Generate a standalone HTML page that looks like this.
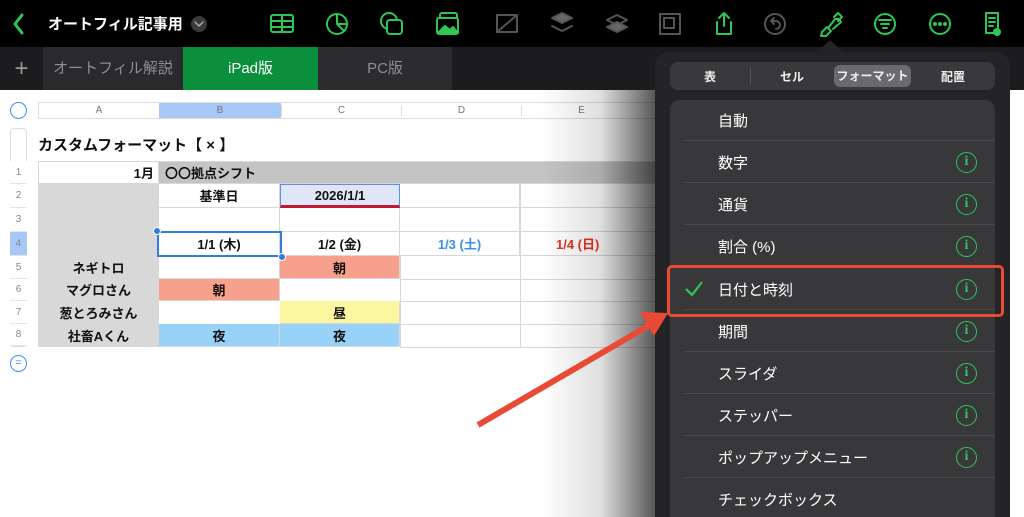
<!DOCTYPE html>
<html style="width:1024px;height:517px;overflow:hidden"><head><meta charset="utf-8"><style>
*{margin:0;padding:0;box-sizing:border-box}
body{width:1024px;height:517px;overflow:hidden;background:#fff;font-family:"Liberation Sans","Noto Sans CJK JP",sans-serif;position:relative}
.a{position:absolute}
.top{left:0;top:0;width:1024px;height:47px;background:#000}
.tabs{left:0;top:47px;width:1024px;height:43px;background:#1c1c1e}
.tab{position:absolute;top:0;height:43px;line-height:43px;text-align:center;font-size:15px;color:#8e8e93}
.cell{position:absolute;border-right:1px solid #d8d8d8;border-bottom:1px solid #d8d8d8;font-size:13px;font-weight:bold;text-align:center;color:#111;display:flex;align-items:center;justify-content:center}
.rn{position:absolute;left:10px;width:17px;font-size:10px;color:#888;text-align:center;border-bottom:1px solid #e4e4e4;background:#fff}
.pop{left:655px;top:52px;width:355px;height:465px;background:#242426;border-radius:14px 14px 0 0}
.row{position:absolute;left:670px;width:325px;height:42px;color:#fff;font-size:15px}
.row span{position:absolute;left:48px;top:11px}
.row .sep{position:absolute;left:14px;right:0;bottom:0;height:1px;background:#4a4a4d}
.info{position:absolute;right:18px;top:11px;width:21px;height:21px;border:1.6px solid #2fc653;border-radius:50%;color:#2fc653;font-family:"Liberation Serif",serif;font-size:14px;font-weight:bold;text-align:center;line-height:18px}
</style></head><body>
<div class="a top"></div>
<svg class="a" style="left:0;top:0" width="1024" height="47" fill="none" stroke-width="2" stroke-linecap="round" stroke-linejoin="round">
<path d="M22 15 L15 24 L22 33" stroke="#2fc653" stroke-width="3"/>
<circle cx="199" cy="24" r="8" fill="#3a3a3c" stroke="none"/><path d="M195 22 L199 26 L203 22" stroke="#aaa" stroke-width="1.5"/>
<g stroke="#2fc653">
<rect x="271" y="15" width="22" height="17" rx="2"/><path d="M271 21h22M271 27h22M282 15v17"/>
<circle cx="337" cy="24" r="10"/><path d="M337 14v10l7 7M337 24h10"/>
<circle cx="389" cy="21" r="8"/><rect x="387" y="20" width="15" height="14" rx="3" fill="#000"/>
<rect x="440" y="13" width="17" height="14" rx="2"/><rect x="437" y="18" width="21" height="16" rx="2" fill="#000"/><path d="M438 33l7-7 5 4 3-3 5 6z" fill="#2fc653"/>
<path d="M717 22v12h14V22M724 13v13M719 18l5-5 5 5"/>
<circle cx="885" cy="24" r="10"/><path d="M879 20h12M881 24h8M883 28h4"/>
<circle cx="940" cy="24" r="10"/><circle cx="935" cy="24" r="1" fill="#2fc653"/><circle cx="940" cy="24" r="1" fill="#2fc653"/><circle cx="945" cy="24" r="1" fill="#2fc653"/>
<path d="M986 13h12v20h-12z M989 18h6M989 22h6M989 26h4"/><circle cx="997" cy="32" r="3" fill="#2fc653"/>
<path d="M822 32l5-5 4 4-5 5-5 0z M829 27l6-8 4 0 2 3-8 7M834 17l4-4 4 4-4 4"/>
</g>
<g stroke="#555"><rect x="497" y="15" width="20" height="17"/><path d="M497 32l20-17"/>
<path d="M552 18l10-5 10 5-10 5z" fill="#666"/><path d="M552 26l10 5 10-5"/>
<path d="M607 20l10-5 10 5-10 5z"/><path d="M607 27l10 5 10-5-10-5z" fill="#666"/>
<rect x="660" y="14" width="20" height="20"/><rect x="664" y="18" width="10" height="10"/>
<circle cx="775" cy="24" r="10"/><path d="M771 21h5a4 4 0 1 1 0 8M771 21l3-3M771 21l3 3"/></g>
</svg>
<div class="a" style="left:48px;top:13px;color:#fff;font-size:15px;font-weight:bold">オートフィル記事用</div>
<div class="a tabs">
<div class="tab" style="left:0;width:43px;font-size:24px;color:#999">+</div>
<div class="tab" style="left:43px;width:140px;background:#2a2a2c">オートフィル解説</div>
<div class="tab" style="left:183px;width:135px;background:#0a8f3c;color:#fff">iPad版</div>
<div class="tab" style="left:318px;width:134px;background:#2c2c2e">PC版</div>
</div>
<div class="a" style="left:10px;top:102px;width:17px;height:17px;border:1.5px solid #3a8ef0;border-radius:50%"></div>
<div class="a" style="left:38px;top:102px;width:620px;height:17px;border:1px solid #ddd;font-size:10px;color:#777">
<div class="a" style="left:0;width:120px;text-align:center;top:2px">A</div>
<div class="a" style="left:120px;width:122px;background:#a8c8f8;height:15px;text-align:center;padding-top:2px">B</div>
<div class="a" style="left:242px;width:120px;text-align:center;top:2px;border-left:1px solid #ddd">C</div>
<div class="a" style="left:362px;width:120px;text-align:center;top:2px;border-left:1px solid #ddd">D</div>
<div class="a" style="left:482px;width:120px;text-align:center;top:2px;border-left:1px solid #ddd">E</div>
</div>
<div class="a" style="left:10px;top:128px;width:17px;height:219px;border:1px solid #ddd;border-radius:4px"></div>
<div class="rn" style="top:161px;height:23px;line-height:23px">1</div>
<div class="rn" style="top:184px;height:24px;line-height:24px">2</div>
<div class="rn" style="top:208px;height:24px;line-height:24px">3</div>
<div class="rn" style="top:232px;height:24px;line-height:24px;background:#a8c8f8">4</div>
<div class="rn" style="top:256px;height:23px;line-height:23px">5</div>
<div class="rn" style="top:279px;height:22px;line-height:22px">6</div>
<div class="rn" style="top:301px;height:23px;line-height:23px">7</div>
<div class="rn" style="top:324px;height:22px;line-height:22px">8</div>
<div class="a" style="left:10px;top:355px;width:17px;height:17px;border:1px solid #3a8ef0;border-radius:50%;color:#3a8ef0;font-size:11px;text-align:center;line-height:14px">=</div>
<div class="a" style="left:38px;top:134px;font-size:15px;font-weight:bold;color:#111">カスタムフォーマット【 × 】</div>
<div class="a" style="left:38px;top:161px;width:620px;height:186px;border-left:1px solid #d8d8d8;border-top:1px solid #d8d8d8">
<div class="cell" style="left:0;top:0;width:120px;height:22px;justify-content:flex-end;padding-right:4px">1月</div>
<div class="cell" style="left:120px;top:0;width:500px;height:22px;background:#c4c4c4;justify-content:flex-start;padding-left:6px">〇〇拠点シフト</div>
<div class="cell" style="left:0;top:22px;width:120px;height:72px;background:#d8d8d8"></div>
<div class="cell" style="left:120px;top:22px;width:121px;height:24px">基準日</div>
<div class="cell" style="left:241px;top:22px;width:120px;height:24px;background:#dfe6f7;border:1px solid #5b8ee8;border-bottom:3px solid #c2183a">2026/1/1</div>
<div class="cell" style="left:361px;top:22px;width:120px;height:24px"></div><div class="cell" style="left:481px;top:22px;width:139px;height:24px"></div>
<div class="cell" style="left:120px;top:46px;width:121px;height:24px"></div><div class="cell" style="left:241px;top:46px;width:120px;height:24px"></div><div class="cell" style="left:361px;top:46px;width:120px;height:24px"></div><div class="cell" style="left:481px;top:46px;width:139px;height:24px"></div>
<div class="cell" style="left:120px;top:70px;width:121px;height:24px">1/1 (木)</div>
<div class="cell" style="left:241px;top:70px;width:120px;height:24px">1/2 (金)</div>
<div class="cell" style="left:361px;top:70px;width:120px;height:24px;color:#3a8ef0">1/3 (土)</div>
<div class="cell" style="left:481px;top:70px;width:139px;height:24px;color:#e8331c;justify-content:flex-start;padding-left:36px">1/4 (日)</div>
<div class="cell" style="left:0;top:94px;width:120px;height:23px;background:#d8d8d8">ネギトロ</div>
<div class="cell" style="left:120px;top:94px;width:121px;height:23px"></div><div class="cell" style="left:241px;top:94px;width:120px;height:23px;background:#f7a08c">朝</div>
<div class="cell" style="left:0;top:117px;width:120px;height:22px;background:#d8d8d8">マグロさん</div>
<div class="cell" style="left:120px;top:117px;width:121px;height:22px;background:#f7a08c">朝</div>
<div class="cell" style="left:0;top:139px;width:120px;height:23px;background:#d8d8d8">葱とろみさん</div>
<div class="cell" style="left:241px;top:139px;width:120px;height:23px;background:#fbf6a0">昼</div>
<div class="cell" style="left:0;top:162px;width:120px;height:23px;background:#d8d8d8">社畜Aくん</div>
<div class="cell" style="left:120px;top:162px;width:121px;height:23px;background:#99d2f8">夜</div>
<div class="cell" style="left:241px;top:162px;width:120px;height:23px;background:#99d2f8">夜</div>
<div class="a" style="left:361px;top:94px;width:0;height:92px;border-left:1px solid #d8d8d8"></div>
<div class="a" style="left:481px;top:22px;width:0;height:164px;border-left:1px solid #d8d8d8"></div>
<div class="a" style="left:361px;top:117px;width:260px;border-top:1px solid #d8d8d8"></div>
<div class="a" style="left:361px;top:139px;width:260px;border-top:1px solid #d8d8d8"></div>
<div class="a" style="left:361px;top:162px;width:260px;border-top:1px solid #d8d8d8"></div>
<div class="a" style="left:361px;top:185px;width:260px;border-top:1px solid #d8d8d8"></div>
<div class="a" style="left:118px;top:69px;width:125px;height:26px;border:2px solid #2f7de1"></div>
<div class="a" style="left:114px;top:65px;width:8px;height:8px;border-radius:50%;background:#2f7de1;border:1px solid #fff"></div>
<div class="a" style="left:239px;top:91px;width:8px;height:8px;border-radius:50%;background:#2f7de1;border:1px solid #fff"></div>
</div>
<div class="a" style="left:540px;top:90px;width:120px;height:427px;background:linear-gradient(90deg,rgba(0,0,0,0),rgba(0,0,0,0.12) 50%,rgba(0,0,0,0.7))"></div>
<svg class="a" style="left:815px;top:38px" width="30" height="16"><path d="M0 16 L15 2 L30 16z" fill="#242426"/></svg>
<div class="a pop"></div>
<div class="a" style="left:670px;top:62px;width:325px;height:28px;background:#39393c;border-radius:8px;color:#eee;font-size:12px;font-weight:bold">
<div class="a" style="left:0;width:80px;text-align:center;top:6px">表</div>
<div class="a" style="left:80px;top:6px;width:1px;height:16px;background:#555"></div>
<div class="a" style="left:81px;width:82px;text-align:center;top:6px">セル</div>
<div class="a" style="left:164px;top:3px;width:77px;height:22px;background:#6a6a6e;border-radius:6px;text-align:center;line-height:22px">フォーマット</div>
<div class="a" style="left:241px;width:84px;text-align:center;top:6px">配置</div>
</div>
<div class="a" style="left:670px;top:100px;width:325px;height:417px;background:#38383b;border-radius:10px 10px 0 0"></div>
<div class="row" style="top:99px"><span>自動</span><div class="sep"></div></div>
<div class="row" style="top:141px"><span>数字</span><div class="info">i</div><div class="sep"></div></div>
<div class="row" style="top:183px"><span>通貨</span><div class="info">i</div><div class="sep"></div></div>
<div class="row" style="top:225px"><span>割合 (%)</span><div class="info">i</div><div class="sep"></div></div>
<div class="row" style="top:268px"><span>日付と時刻</span><div class="info">i</div><div class="sep"></div>
<svg class="a" style="left:14px;top:12px" width="20" height="18"><path d="M2 9 L8 15 L18 2" stroke="#2fc653" stroke-width="2.2" fill="none"/></svg></div>
<div class="row" style="top:310px"><span>期間</span><div class="info">i</div><div class="sep"></div></div>
<div class="row" style="top:352px"><span>スライダ</span><div class="info">i</div><div class="sep"></div></div>
<div class="row" style="top:394px"><span>ステッパー</span><div class="info">i</div><div class="sep"></div></div>
<div class="row" style="top:436px"><span>ポップアップメニュー</span><div class="info">i</div><div class="sep"></div></div>
<div class="row" style="top:478px;height:39px"><span>チェックボックス</span></div>
<div class="a" style="left:667px;top:265px;width:337px;height:52px;border:3.5px solid #e94a35;border-radius:5px"></div>
<svg class="a" style="left:0;top:0" width="1024" height="517"><path d="M478 425 L655 322" stroke="#e94a35" stroke-width="6"/><path d="M668 313 L640 312 L654 336z" fill="#e94a35"/></svg>
</body></html>
